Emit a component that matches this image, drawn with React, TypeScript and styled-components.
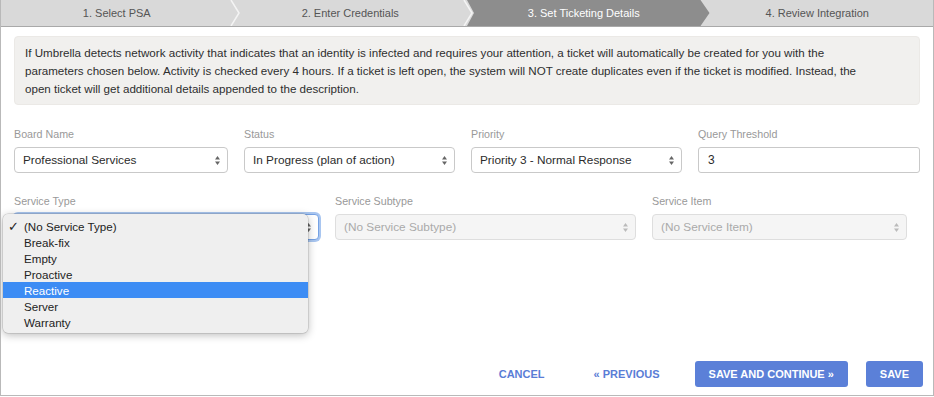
import React from 'react'
import styled, { createGlobalStyle, css } from 'styled-components'

const GlobalStyle = createGlobalStyle`
  html, body {
    margin: 0;
    padding: 0;
    background: #ffffff;
    font-family: 'Liberation Sans', Arial, sans-serif;
  }
`

const steps = ['1. Select PSA', '2. Enter Credentials', '3. Set Ticketing Details', '4. Review Integration']
const serviceTypes = ['(No Service Type)', 'Break-fix', 'Empty', 'Proactive', 'Reactive', 'Server', 'Warranty']

function Arrows() {
  return (
    <svg width="5" height="9" viewBox="0 0 5 9">
      <path d="M2.5 0 L5 3.5 L0 3.5 Z" fill="currentColor" />
      <path d="M2.5 9 L5 5.5 L0 5.5 Z" fill="currentColor" />
    </svg>
  )
}

function Chevron() {
  return (
    <svg width="10" height="26" viewBox="0 0 10 26">
      <path d="M1 0 L9 13 L1 26" fill="none" stroke="#f4f4f4" strokeWidth="1.5" />
    </svg>
  )
}

function App() {
  return (
    <Frame>
      <GlobalStyle />
      <StepBar>
        {steps.map((s, i) => (
          <Step key={s} active={i === 2}>
            {s}
            {(i === 0 || i === 1) && (
              <Sep>
                <Chevron />
              </Sep>
            )}
          </Step>
        ))}
      </StepBar>

      <Content>
        <Info>
          If Umbrella detects network activity that indicates that an identity is infected and requires your attention, a ticket will automatically be created for you with the
          <br />
          parameters chosen below. Activity is checked every 4 hours. If a ticket is left open, the system will NOT create duplicates even if the ticket is modified. Instead, the
          <br />
          open ticket will get additional details appended to the description.
        </Info>

        <FieldRow cols="214px 211px 211px 1fr">
          <Field>
            <Label>Board Name</Label>
            <SelectBox>
              <span>Professional Services</span>
              <Arrows />
            </SelectBox>
          </Field>
          <Field>
            <Label>Status</Label>
            <SelectBox>
              <span>In Progress (plan of action)</span>
              <Arrows />
            </SelectBox>
          </Field>
          <Field>
            <Label>Priority</Label>
            <SelectBox>
              <span>Priority 3 - Normal Response</span>
              <Arrows />
            </SelectBox>
          </Field>
          <Field>
            <Label>Query Threshold</Label>
            <TextInput>3</TextInput>
          </Field>
        </FieldRow>

        <FieldRow cols="305px 301px 255px">
          <Field>
            <Label>Service Type</Label>
            {/* the open menu covers the selected value */}
            <SelectBox focused>
              <span />
              <Arrows />
            </SelectBox>
            <Menu>
              {serviceTypes.map((t, i) => (
                <MenuItem key={t} highlighted={t === 'Reactive'}>
                  <Check>{i === 0 ? '✓' : ''}</Check>
                  {t}
                </MenuItem>
              ))}
            </Menu>
          </Field>
          <Field>
            <Label>Service Subtype</Label>
            <SelectBox disabled>
              <span>(No Service Subtype)</span>
              <Arrows />
            </SelectBox>
          </Field>
          <Field>
            <Label>Service Item</Label>
            <SelectBox disabled>
              <span>(No Service Item)</span>
              <Arrows />
            </SelectBox>
          </Field>
        </FieldRow>
      </Content>

      <Footer>
        <TextButton>Cancel</TextButton>
        <TextButton>« Previous</TextButton>
        <Button>Save and Continue »</Button>
        <Button>Save</Button>
      </Footer>
    </Frame>
  )
}

export default App

const Frame = styled.div`
  display: flex;
  flex-direction: column;
  height: 396px;
  box-sizing: border-box;
  border: 1px solid #b9b9b9;
  border-top: none;
  overflow: hidden;
`

const StepBar = styled.div`
  display: flex;
  height: 26px;
  background: #d9d9d9;
  border-bottom: 1px solid #a9a9a9;
  margin: 0 -1px;
`

const Step = styled.div<{ active?: boolean }>`
  position: relative;
  width: 25%;
  display: flex;
  align-items: center;
  justify-content: center;
  font-size: 11px;
  color: #555;
  box-sizing: border-box;

  ${p =>
    p.active &&
    css`
      width: calc(25% + 9px);
      margin-right: -9px;
      padding-right: 9px;
      background: #8d8d8d;
      color: #ffffff;
      z-index: 1;
      clip-path: polygon(0 0, calc(100% - 9px) 0, 100% 50%, calc(100% - 9px) 100%, 0 100%, 7px 50%);
    `}
`

const Sep = styled.span`
  position: absolute;
  right: -6px;
  top: 0;
  height: 26px;
  display: flex;
  z-index: 2;
`

const Content = styled.div`
  padding: 9px 13px 0 13px;
`

const Info = styled.div`
  background: #f1f0ee;
  border: 1px solid #ebe9e6;
  border-radius: 4px;
  padding: 7px 10px 6px;
  font-size: 11.6px;
  line-height: 18px;
  color: #2e2e2e;
  white-space: nowrap;
`

const FieldRow = styled.div<{ cols: string }>`
  display: grid;
  grid-template-columns: ${p => p.cols};
  column-gap: 16px;
  margin-top: 22px;

  & + & {
    margin-top: 21px;
  }
`

const Field = styled.div`
  position: relative;
  display: flex;
  flex-direction: column;
`

const Label = styled.div`
  font-size: 10.7px;
  line-height: 14px;
  color: #999;
  margin-bottom: 6px;
`

const SelectBox = styled.div<{ disabled?: boolean; focused?: boolean }>`
  display: flex;
  align-items: center;
  justify-content: space-between;
  height: 26px;
  box-sizing: border-box;
  padding: 0 7px 0 8px;
  border: 1px solid #c9c9c9;
  border-radius: 4px;
  background: #ffffff;
  font-size: 11.8px;
  color: #2b2b2b;

  svg {
    color: #666;
  }

  ${p =>
    p.disabled &&
    css`
      background: #f5f5f5;
      border-color: #dedede;
      color: #aaa;
      svg {
        color: #bbb;
      }
    `}

  ${p =>
    p.focused &&
    css`
      border-color: #76a2e4;
      box-shadow: 0 0 0 2px #a9c6f0;
    `}
`

const TextInput = styled.div`
  height: 26px;
  box-sizing: border-box;
  display: flex;
  align-items: center;
  padding: 0 9px;
  border: 1px solid #c9c9c9;
  border-radius: 3px;
  font-size: 12px;
  color: #2b2b2b;
`

const Menu = styled.div`
  position: absolute;
  left: -11px;
  top: 20px;
  width: 305px;
  padding: 4px 0 3px;
  background: #efefef;
  border-radius: 5px;
  box-shadow: 0 2px 8px rgba(0, 0, 0, 0.28), 0 0 0 0.5px rgba(0, 0, 0, 0.18);
  z-index: 5;
`

const MenuItem = styled.div<{ highlighted?: boolean }>`
  display: flex;
  align-items: center;
  height: 16px;
  font-size: 11.6px;
  color: #222;

  ${p =>
    p.highlighted &&
    css`
      background: #3c8cf4;
      color: #ffffff;
    `}
`

const Check = styled.span`
  flex-shrink: 0;
  width: 21px;
  padding-left: 5px;
  box-sizing: border-box;
  font-family: 'DejaVu Sans', sans-serif;
  font-size: 13px;
  font-weight: bold;
`

const Footer = styled.div`
  margin-top: auto;
  display: flex;
  justify-content: flex-end;
  gap: 18px;
  padding: 0 10px 8px 0;
`

const TextButton = styled.button`
  height: 26px;
  padding: 0 17px;
  border: none;
  background: none;
  font-family: 'Liberation Sans', Arial, sans-serif;
  font-size: 11px;
  font-weight: bold;
  text-transform: uppercase;
  color: #5a7dd6;
  cursor: pointer;

  &:first-child {
    margin-right: -3px;
  }
`

const Button = styled(TextButton)`
  padding: 0 14px;
  background: #5b80d8;
  color: #ffffff;
  border-radius: 3px;
`
